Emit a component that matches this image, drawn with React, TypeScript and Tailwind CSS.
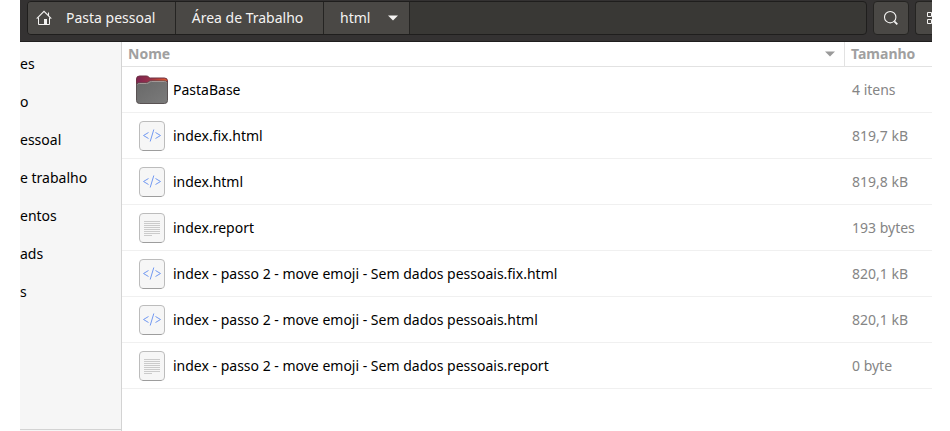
import React from "react";

type Kind = "folder" | "html" | "text";

const files: { name: string; size: string; kind: Kind }[] = [
  { name: "PastaBase", size: "4 itens", kind: "folder" },
  { name: "index.fix.html", size: "819,7 kB", kind: "html" },
  { name: "index.html", size: "819,8 kB", kind: "html" },
  { name: "index.report", size: "193 bytes", kind: "text" },
  { name: "index - passo 2 - move emoji - Sem dados pessoais.fix.html", size: "820,1 kB", kind: "html" },
  { name: "index - passo 2 - move emoji - Sem dados pessoais.html", size: "820,1 kB", kind: "html" },
  { name: "index - passo 2 - move emoji - Sem dados pessoais.report", size: "0 byte", kind: "text" },
];

const places = ["es", "o", "essoal", "e trabalho", "entos", "ads", "s"];

function HomeIcon() {
  return (
    <svg width="16" height="16" viewBox="0 0 16 16" fill="none" stroke="#f4f3f2" aria-hidden="true">
      <path d="M.7 8.7 8 1.4l7.3 7.3M12.5 5.4V2.5" strokeWidth="1.1" />
      <path d="M2.5 7.5v7h6M11 14.5h2.500v-7" />
      <path d="M8 9h3v6H8z" fill="#f4f3f2" stroke="none" />
    </svg>
  );
}

function SearchIcon() {
  return (
    <svg width="16" height="16" viewBox="0 0 16 16" fill="none" stroke="#f4f3f2" aria-hidden="true">
      <circle cx="7.2" cy="7.2" r="5.7" strokeWidth="1.1" />
      <path d="m11.3 11.3 3 3" strokeWidth="1.8" />
    </svg>
  );
}

function GridIcon() {
  return (
    <svg className="shrink-0" width="16" height="16" viewBox="0 0 16 16" fill="none" stroke="#f4f3f2" aria-hidden="true">
      <path d="M1.5 2.5h4v4h-4zM8.5 2.5h4v4h-4zM1.5 9.5h4v4h-4zM8.5 9.5h4v4h-4z" />
    </svg>
  );
}

function Caret({ className }: { className: string }) {
  return (
    <svg className={className} width="10" height="6" viewBox="0 0 10 6" aria-hidden="true">
      <path d="M0 .5h10L5 5.5z" fill="currentColor" />
    </svg>
  );
}

function FolderIcon() {
  return (
    <svg width="32" height="30" viewBox="0 0 32 30" aria-hidden="true">
      <defs>
        <linearGradient id="tab" x1="0" x2="1">
          <stop offset="0" stopColor="#7d2350" />
          <stop offset=".4" stopColor="#96304a" />
          <stop offset="1" stopColor="#e2592c" />
        </linearGradient>
        <linearGradient id="front" x1="0" y1="0" x2="1" y2="1">
          <stop offset="0" stopColor="#686868" />
          <stop offset="1" stopColor="#7b7b7b" />
        </linearGradient>
      </defs>
      <path d="M.5 4A3 3 0 0 1 3.5 1h7c2 0 2.5 2 4 2h14a3 3 0 0 1 3 3v10H.5z" fill="url(#tab)" stroke="#6c3344" />
      <path d="M.5 10.5c0-2 1-2.500 2.500-2.500h7c2.500 0 2.500-2 5-2h14c1.500 0 2.500.8 2.500 2.500v17a3 3 0 0 1-3 3h-25a3 3 0 0 1-3-3z" fill="url(#front)" stroke="#595253" />
      <path d="M1.5 9.500q.5-1 2-1h7c2.500 0 2.500-2 5-2h13q1.500 0 2 1" fill="none" stroke="#a39796" />
    </svg>
  );
}

function FileIcon({ kind }: { kind: Kind }) {
  return (
    <svg width="28" height="32" viewBox="0 0 28 32" aria-hidden="true">
      <rect x="1.5" y="1.5" width="25" height="29" rx="3.500" fill="#f6f6f6" stroke="#bcbcbc" />
      <path d="M4.500 30.500h19" stroke="#9d9d9d" />
      {kind === "html" ? (
        <path d="m10.500 12.500-5 3 5 3M17.500 12.500l5 3-5 3M15.800 9.500l-3.600 12" fill="none" stroke="#7299f2" />
      ) : (
        <path d="M6 9.500h16M6 11.500h16M6 13.500h16M6 15.500h16M6 17.500h16M6 19.500h16M6 21.500h16M6 23.500h8" stroke="#cbcbcb" />
      )}
    </svg>
  );
}

export default function App() {
  return (
    <div className="flex h-screen flex-col overflow-hidden bg-white pr-[18px] pl-5 font-['Noto_Sans',sans-serif] text-sm leading-5 text-black">
      <header className="flex shrink-0 gap-1.5 overflow-hidden border-b border-[#1f1e1e] bg-[#343232] pt-px pb-1.5 pl-[7px]">
        <nav aria-label="Caminho" className="flex h-[34px] min-w-0 flex-1 overflow-hidden rounded border border-[#1f1e1d] bg-[#393835] text-[#f4f3f2]">
          <button className="flex w-[148px] items-center gap-3.5 border-r border-[#252422] bg-[#4a4845] pl-2">
            <HomeIcon />
            Pasta pessoal
          </button>
          <button className="w-[148px] border-r border-[#252422] bg-[#4a4845] pr-1">Área de Trabalho</button>
          <button className="flex w-[86px] items-center gap-[18px] border-r border-[#252422] bg-[#4a4845] pl-4">
            html
            <Caret className="text-[#f4f3f2]" />
          </button>
        </nav>
        <button aria-label="Pesquisar" className="flex w-9 items-center justify-center rounded border border-[#252422] bg-[#4a4845]">
          <SearchIcon />
        </button>
        <button aria-label="Ver em grade" className="flex w-[17px] items-center overflow-hidden rounded-l border border-r-0 border-[#252422] bg-[#4a4845] pl-2.5">
          <GridIcon />
        </button>
      </header>
      <div className="flex min-h-0 flex-1">
        <aside className="flex w-[102px] shrink-0 flex-col overflow-hidden border-r border-[#d3d3d3] bg-[#f6f6f6]">
          <ul className="flex-1 border-b border-[#d3d3d3] pt-[3px]">
            {places.map((p) => (
              <li key={p} className="flex h-[38px] items-center whitespace-nowrap">{p}</li>
            ))}
          </ul>
          <div className="h-px shrink-0" />
        </aside>
        <main className="min-w-0 flex-1 overflow-hidden">
          <table className="w-full table-fixed border-separate border-spacing-0">
            <thead>
              <tr className="h-[25px] text-left text-[#a0a0a0]">
                <th className="border-b border-[#e2e2e2] p-0 font-bold">
                  <button className="flex w-full items-center justify-between pr-[9px] pl-1.5">
                    Nome
                    <Caret className="text-[#9a9a9a]" />
                  </button>
                </th>
                <th className="w-[88px] border-b border-l border-[#e2e2e2] p-0 pl-1.5 font-bold">
                  <button>Tamanho</button>
                </th>
              </tr>
            </thead>
            <tbody>
              {files.map((f) => (
                <tr key={f.name} className="h-[46px]">
                  <td className="border-b border-[#f0f0f0] p-0 pl-3.5">
                    <div className="flex items-center gap-[5px] whitespace-nowrap">
                      <span className="flex w-8 justify-center">
                        {f.kind === "folder" ? <FolderIcon /> : <FileIcon kind={f.kind} />}
                      </span>
                      {f.name}
                    </div>
                  </td>
                  <td className="border-b border-[#f0f0f0] p-0 pl-2 whitespace-nowrap text-[#858585]">{f.size}</td>
                </tr>
              ))}
            </tbody>
          </table>
        </main>
      </div>
    </div>
  );
}
